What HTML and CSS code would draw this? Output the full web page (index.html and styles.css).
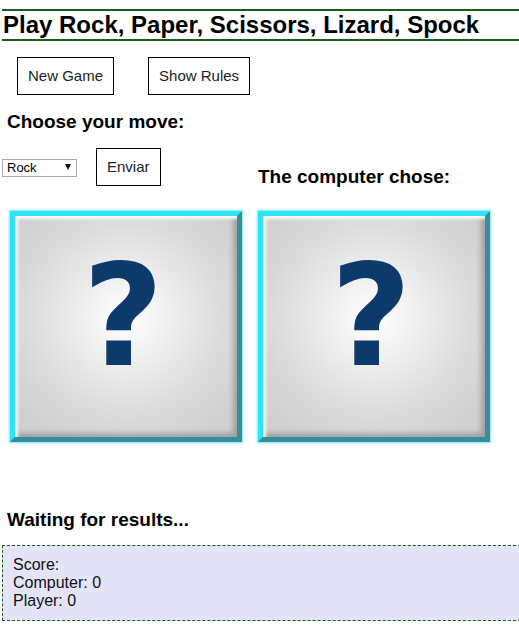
FILE: index.html
```html
<!DOCTYPE html>
<html lang="en">
<head>
<meta charset="utf-8">
<title>Rock, Paper, Scissors, Lizard, Spock</title>
<link rel="stylesheet" href="styles.css">
</head>
<body>
  <h1 class="title">Play Rock, Paper, Scissors, Lizard, Spock</h1>
  <div class="menu">
    <button class="btn">New Game</button>
    <button class="btn">Show Rules</button>
  </div>
  <h3 class="subhead choose">Choose your move:</h3>
  <div class="arena">
    <div class="controls">
      <div class="select-wrap">
        <select class="move">
          <option>Rock</option>
          <option>Paper</option>
          <option>Scissors</option>
          <option>Lizard</option>
          <option>Spock</option>
        </select>
      </div>
      <button class="btn">Enviar</button>
    </div>
    <h3 class="subhead computer">The computer chose:</h3>
    <div class="card"><span class="mark">?</span></div>
    <div class="card"><span class="mark">?</span></div>
  </div>
  <h3 class="subhead result">Waiting for results...</h3>
  <div class="score">Score:<br>Computer: 0<br>Player: 0</div>
</body>
</html>
```
FILE: styles.css
```css
html {
  overflow-x: hidden;
}
body {
  margin: 0;
  padding: 0 0 0 2px;
  font-family: "Liberation Sans", Arial, sans-serif;
  color: #000;
  background: #fff;
}
.title {
  margin: 9px -2px 0 0;
  padding-left: 1px;
  font-size: 24px;
  line-height: 28px;
  font-weight: bold;
  border-top: 2px solid #1d5b1d;
  border-bottom: 2px solid #1d5b1d;
}
.menu {
  display: flex;
  gap: 34px;
  margin-top: 16px;
  padding-left: 15px;
}
.btn {
  font-family: "Liberation Sans", Arial, sans-serif;
  font-size: 15px;
  line-height: 16px;
  color: #222;
  background: #fff;
  border: 1px solid #000;
  border-radius: 0;
  padding: 10px 10px;
  height: 38px;
  margin: 0;
}
.subhead {
  font-size: 19px;
  font-weight: bold;
  line-height: 22px;
  margin: 0;
}
.choose {
  margin-top: 16px;
  padding-left: 5px;
}
.arena {
  display: grid;
  grid-template-columns: 248px 248px;
  row-gap: 25px;
  margin-top: 15px;
}
.controls {
  display: flex;
  align-items: center;
  gap: 19px;
  height: 38px;
}
.select-wrap {
  position: relative;
  width: 75px;
  height: 18px;
}
.select-wrap::after {
  content: "";
  position: absolute;
  right: 6px;
  top: 6px;
  border-left: 3px solid transparent;
  border-right: 3px solid transparent;
  border-top: 6px solid #111;
  pointer-events: none;
}
.move {
  appearance: none;
  -webkit-appearance: none;
  width: 75px;
  height: 18px;
  margin: 0;
  padding: 0 0 0 4px;
  font-family: "Liberation Sans", Arial, sans-serif;
  font-size: 13px;
  line-height: 16px;
  color: #000;
  background: #fff;
  border: 1px solid #a9a9a9;
  border-radius: 0;
}
.computer {
  padding: 19px 0 0 8px;
  line-height: 19px;
}
.card {
  margin-left: 8px;
  width: 232px;
  height: 231px;
  box-sizing: border-box;
  border: 5px solid;
  border-color: #2ee2f4 #3a8c9b #3a8c9b #2ee2f4;
  box-shadow: 0 0 2px 1px rgba(40, 230, 250, 0.7),
              inset 3px 3px 3px rgba(255, 255, 255, 0.9),
              inset -4px -4px 5px rgba(0, 0, 0, 0.22);
  background: radial-gradient(circle at 50% 46%, #ffffff 0%, #f2f2f2 22%, #dedede 55%, #d2d2d2 80%, #cdcdcd 100%);
  display: flex;
  align-items: center;
  justify-content: center;
  padding-bottom: 20px;
  padding-right: 6px;
}
.mark {
  font-family: "DejaVu Sans", sans-serif;
  font-weight: bold;
  font-size: 140px;
  line-height: 140px;
  color: #0b3a6b;
}
.result {
  margin-top: 67px;
  padding-left: 5px;
}
.score {
  margin-top: 14px;
  margin-right: -2px;
  padding: 10px;
  font-size: 16px;
  line-height: 18px;
  color: #111;
  background: #e4e4f8;
  border: 1px dashed #1d5b1d;
}
```
